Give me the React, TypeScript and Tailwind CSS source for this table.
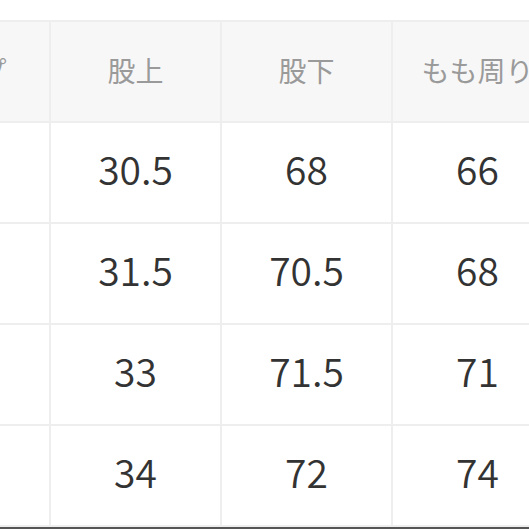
import React from "react";

const header = ["ヒップ", "股上", "股下", "もも周り", "裾幅"];
const rows = [
  ["100", "30.5", "68", "66", "22"],
  ["104", "31.5", "70.5", "68", "23"],
  ["108", "33", "71.5", "71", "24"],
  ["112", "34", "72", "74", "25"],
];

export default function App() {
  return (
    <div
      className="w-[529px] h-[529px] overflow-hidden bg-white flex flex-col"
      style={{ fontFamily: '"Noto Sans CJK JP", "Noto Sans", sans-serif' }}
    >
      <div className="h-[20px] shrink-0 bg-white" />
      <div className="ml-[-122px] w-max shrink-0 grid grid-cols-[repeat(5,169px)] auto-rows-[99px] gap-[2px] p-[2px] bg-[#eeeeee]">
        {header.map((h, i) => (
          <div
            key={"h" + i}
            className="bg-[#f7f7f7] flex items-center justify-center pb-[4px] text-[28px] text-[#9a9a9a] whitespace-nowrap"
          >
            {h}
          </div>
        ))}
        {rows.map((r, ri) =>
          r.map((c, ci) => (
            <div
              key={ri + "-" + ci}
              className="bg-white flex items-center justify-center pb-[8px] text-[39px] font-[350] text-[#333333] whitespace-nowrap"
            >
              {c}
            </div>
          ))
        )}
      </div>
      <div className="h-[2px] shrink-0 bg-[#555555]" />
    </div>
  );
}
